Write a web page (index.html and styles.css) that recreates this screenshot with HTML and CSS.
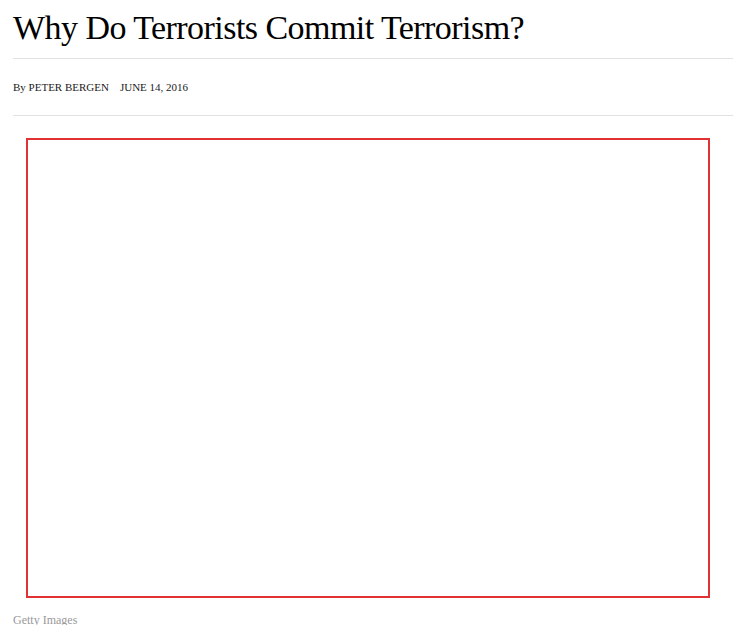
FILE: index.html
```html
<!DOCTYPE html>
<html lang="en">
<head>
<meta charset="utf-8">
<title>Why Do Terrorists Commit Terrorism?</title>
<link rel="stylesheet" href="styles.css">
</head>
<body>
<article class="story">
  <header class="story-header">
    <h1 class="headline">Why Do Terrorists Commit Terrorism?</h1>
    <div class="byline-row">
      <span class="byline">By PETER BERGEN</span>
      <time class="dateline">JUNE 14, 2016</time>
    </div>
  </header>
  <figure class="media">
    <div class="media-frame"></div>
    <figcaption class="credit">Getty Images</figcaption>
  </figure>
</article>
</body>
</html>
```
FILE: styles.css
```css
html, body {
  margin: 0;
  padding: 0;
  background: #fff;
}
body {
  font-family: "Liberation Serif", "Times New Roman", serif;
  color: #111;
}
.story {
  padding-left: 13px;
}
.story-header {
  display: flex;
  flex-direction: column;
}
.headline {
  margin: 0;
  padding-top: 8px;
  height: 59px;
  box-sizing: border-box;
  font-size: 34px;
  font-weight: normal;
  line-height: 40px;
  letter-spacing: -0.55px;
  color: #000;
  border-bottom: 1px solid #e2e2e2;
}
.byline-row {
  display: flex;
  gap: 11px;
  align-items: center;
  height: 57px;
  box-sizing: border-box;
  border-bottom: 1px solid #e2e2e2;
  font-size: 11px;
  color: #1a1a1a;
}
.media {
  margin: 0;
  padding-top: 22px;
}
.media-frame {
  margin-left: 13px;
  width: 684px;
  height: 460px;
  box-sizing: border-box;
  border: 2px solid #e03232;
}
.credit {
  margin-top: 15px;
  font-size: 12px;
  color: #999;
}
```
